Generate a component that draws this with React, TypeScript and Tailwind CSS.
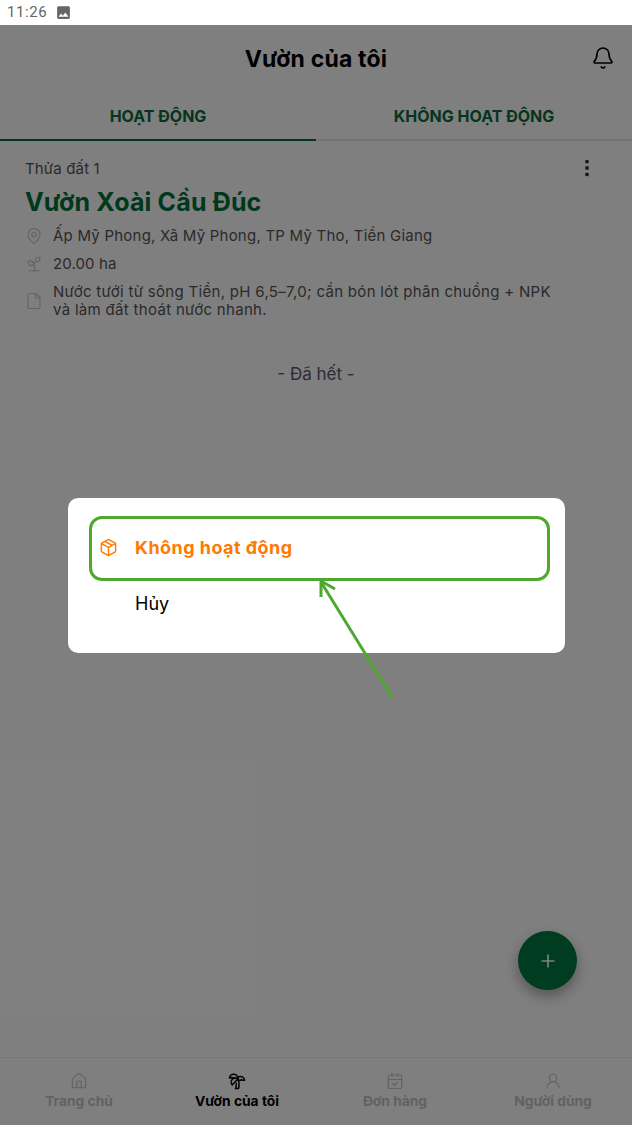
import { Bell, CalendarCheck, EllipsisVertical, File, House, MapPin, Package, Plus, Sprout, TreePalm, UserRound } from "lucide-react";
import { MdImage } from "react-icons/md";

const font = { fontFamily: '"Inter", "Noto Sans", sans-serif' };

function NavItem({ icon, label, active }: { icon: React.ReactNode; label: string; active?: boolean }) {
  return (
    <div className="flex flex-col items-center">
      <div className={`h-[18px] mt-[1px] ${active ? "text-black" : "text-[#c4c4c4]"}`}>{icon}</div>
      <span className={`mt-[2px] text-[13.8px] leading-[18px] font-bold ${active ? "text-black" : "text-[#c4c4c4]"}`}>{label}</span>
    </div>
  );
}

export default function App() {
  return (
    <div className="relative w-[632px] h-[1125px] overflow-hidden bg-white flex flex-col" style={font}>
      <div className="h-[25px] shrink-0 flex items-center pl-[7px] bg-white text-[#666666]" style={{ fontFamily: "Roboto, sans-serif" }}>
        <span className="text-[15px] leading-none tracking-[0.6px]">11:26</span>
        <MdImage className="ml-[8px]" size={17} />
      </div>

      <div className="relative flex-1 flex flex-col min-h-0">
        <header className="h-[67px] shrink-0 flex items-center justify-center relative">
          <h1 className="text-[23px] tracking-[0.2px] font-bold text-black mt-[1px]">Vườn của tôi</h1>
          <Bell className="absolute right-[17px] top-[21px] text-black" size={24} strokeWidth={1.7} />
        </header>

        <div className="h-[49px] shrink-0 grid grid-cols-2 border-b-2 border-[#e8e8e8] text-[16px] font-bold text-[#0b6b3c]">
          <div className="flex items-center justify-center border-b-[2px] border-[#006b38] mb-[-2px]">HOẠT ĐỘNG</div>
          <div className="flex items-center justify-center">KHÔNG HOẠT ĐỘNG</div>
        </div>

        <section className="mx-[25px] pt-[18px] h-[193px] border-b border-[#f8f8f8] relative shrink-0">
          <p className="text-[15px] tracking-[0.15px] leading-[20px] text-[#555555]">Thửa đất 1</p>
          <EllipsisVertical className="absolute right-[9px] top-[16px] text-[#333333]" size={22} strokeWidth={2.2} />
          <h2 className="mt-[7px] text-[25px] tracking-[0.15px] leading-[32px] font-bold text-[#007038]">Vườn Xoài Cầu Đúc</h2>
          <div className="mt-[8px] flex items-center gap-[10px] h-[20px] text-[15px] tracking-[0.23px] text-[#555555]">
            <MapPin className="text-[#c8c8c8] shrink-0" size={18} strokeWidth={1.6} />
            <span>Ấp Mỹ Phong, Xã Mỹ Phong, TP Mỹ Tho, Tiền Giang</span>
          </div>
          <div className="mt-[8px] flex items-center gap-[10px] h-[20px] text-[15px] tracking-[0.1px] text-[#555555]">
            <Sprout className="text-[#c8c8c8] shrink-0" size={18} strokeWidth={1.6} />
            <span>20.00 ha</span>
          </div>
          <div className="mt-[9px] flex items-center gap-[10px] text-[15px] tracking-[0.31px] leading-[18px] text-[#555555]">
            <File className="text-[#c8c8c8] shrink-0" size={18} strokeWidth={1.6} />
            <span className="w-[530px]">Nước tưới từ sông Tiền, pH 6,5–7,0; cần bón lót phân chuồng + NPK<br />và làm đất thoát nước nhanh.</span>
          </div>
        </section>

        <p className="text-center mt-[29px] text-[17px] leading-[22px] text-[#555a66]">- Đã hết -</p>

        <div className="flex-1" />

        <div className="absolute right-[55px] top-[906px] w-[59px] h-[59px] rounded-full bg-[#007a40] shadow-[0_6px_14px_rgba(0,0,0,0.35)] flex items-center justify-center text-white">
          <Plus size={20} strokeWidth={2} />
        </div>

        <nav className="h-[68px] shrink-0 border-t border-[#eeeeee] grid grid-cols-4 pt-[13px] bg-white">
          <NavItem icon={<House size={18} strokeWidth={1.6} />} label="Trang chủ" />
          <NavItem icon={<TreePalm size={18} strokeWidth={2} />} label="Vườn của tôi" active />
          <NavItem icon={<CalendarCheck size={18} strokeWidth={1.6} />} label="Đơn hàng" />
          <NavItem icon={<UserRound size={18} strokeWidth={1.6} />} label="Người dùng" />
        </nav>

        {/* dim layer over the page */}
        <div className="absolute inset-0 bg-black/50" />

        {/* action sheet */}
        <div className="absolute left-[67.5px] top-[473px] w-[497px] h-[154.5px] rounded-[10px] bg-white">
          <div className="h-[56px] mt-[21px] flex items-center pl-[31px] gap-[17.5px] text-[#ff7a00]">
            <Package size={19} strokeWidth={1.8} />
            <span className="text-[18px] tracking-[0.45px] font-bold">Không hoạt động</span>
          </div>
          <div className="h-[56px] flex items-center pl-[67.5px] text-[18px] text-black">Hủy</div>
        </div>

        {/* annotation */}
        <div className="absolute left-[89px] top-[491px] w-[461px] h-[65px] rounded-[13px] border-[3px] border-[#4fa82e]" />
        <svg className="absolute left-[310px] top-[545px]" width="95" height="135" viewBox="0 0 95 135" fill="none" stroke="#4fa82e" strokeWidth="3">
          <path d="M82 127 L11 12" />
          <path d="M11 27 L11 11 L25 19" />
        </svg>
      </div>
    </div>
  );
}
